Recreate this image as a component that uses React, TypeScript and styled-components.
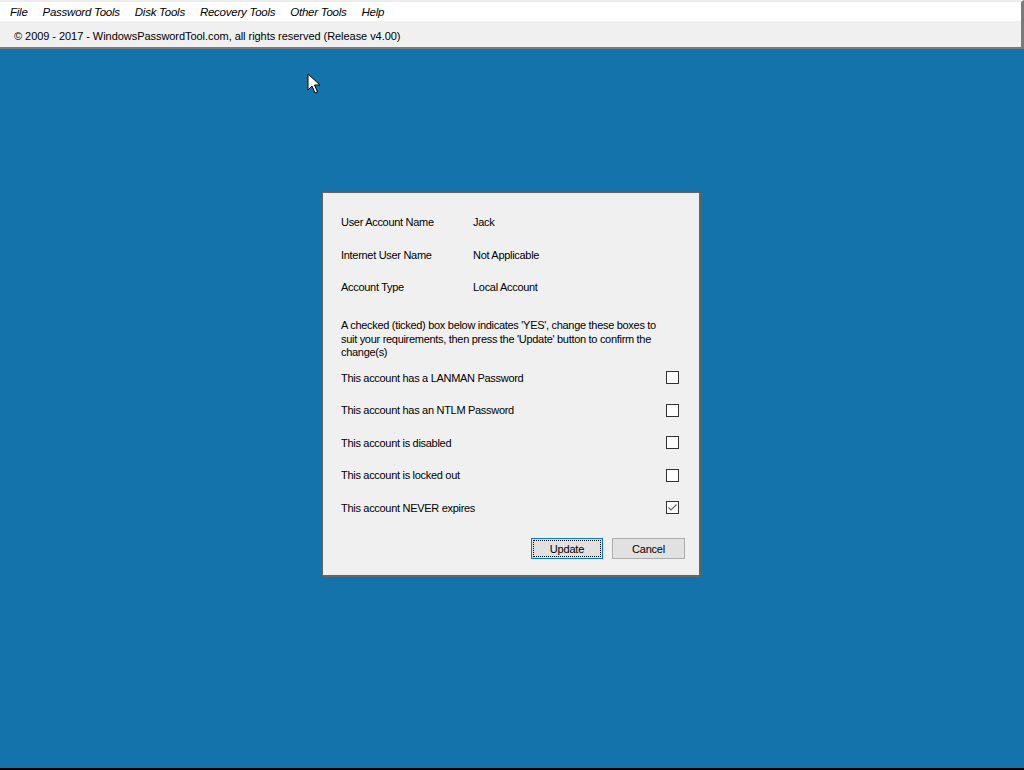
import styled, { createGlobalStyle } from "styled-components";

const GlobalStyle = createGlobalStyle`
  html, body {
    margin: 0;
    padding: 0;
    background: #000;
  }
  #root {
    height: 770px;
    width: 1024px;
    overflow: hidden;
  }
`;

const Screen = styled.div`
  position: relative;
  height: 768px;
  display: flex;
  flex-direction: column;
  background-color: #1373aa;
  font-family: "Liberation Sans", Arial, sans-serif;
  color: #000;
`;

const Header = styled.div`
  display: flex;
  flex-direction: column;
  border-top: 2px solid #ececec;
  border-right: 3px solid #7a7a7a;
  border-bottom: 2px solid #7a7a7a;
`;

const MenuBar = styled.div`
  height: 19px;
  display: flex;
  align-items: center;
  background: #fff;
  padding-left: 10px;
  padding-top: 1px;
  box-sizing: border-box;
  gap: 15px;
`;

const MenuItem = styled.span`
  font-style: italic;
  font-size: 11.5px;
  letter-spacing: -0.25px;
`;

const StatusBar = styled.div`
  height: 26px;
  box-sizing: border-box;
  padding-top: 3px;
  display: flex;
  align-items: center;
  background: #f0f0f0;
  padding-left: 14px;
  font-size: 11px;
  letter-spacing: -0.05px;
`;

const Desktop = styled.div`
  flex: 1;
  display: flex;
  justify-content: center;
  padding-top: 143px;
  padding-right: 1px;
`;

const Dialog = styled.div`
  width: 344px;
  height: 366px;
  box-sizing: content-box;
  background: #f0f0f0;
  border-top: 1px solid #646464;
  border-left: 1px solid #646464;
  border-right: 2px solid #646464;
  border-bottom: 2px solid #646464;
  padding: 0 14px 16px 18px;
  display: flex;
  flex-direction: column;
  font-size: 11px;
  letter-spacing: -0.3px;
`;

const InfoList = styled.div`
  display: flex;
  flex-direction: column;
  padding-top: 22px;
  gap: 18.5px;
`;

const InfoRow = styled.div`
  display: grid;
  grid-template-columns: 132px 1fr;
  height: 14px;
  line-height: 14px;
`;

const Notice = styled.p`
  margin: 25px 0 0;
  line-height: 13.5px;
  width: 322px;
`;

const OptionList = styled.div`
  display: flex;
  flex-direction: column;
  margin-top: 11px;
  gap: 18.5px;
`;

const OptionRow = styled.label`
  display: flex;
  align-items: center;
  justify-content: space-between;
  height: 14px;
  padding-right: 6px;
`;

const Box = styled.span`
  width: 11px;
  height: 11px;
  border: 1px solid #333;
  background: #fff;
  display: flex;
  align-items: center;
  justify-content: center;
`;

const Buttons = styled.div`
  margin-top: auto;
  display: flex;
  justify-content: flex-end;
  gap: 9px;
`;

const Button = styled.button<{ $default?: boolean }>`
  width: ${(p) => (p.$default ? "72px" : "73px")};
  height: 21px;
  padding: 0;
  background: #e1e1e1;
  border: 1px solid ${(p) => (p.$default ? "#0078d7" : "#adadad")};
  font-family: "Liberation Sans", Arial, sans-serif;
  font-size: 11px;
  letter-spacing: -0.2px;
  color: #000;
  position: relative;
  ${(p) =>
    p.$default &&
    `
    &::after {
      content: "";
      position: absolute;
      inset: 1px;
      border: 1px dotted #000;
    }
  `}
`;

const Cursor = styled.svg`
  position: absolute;
  left: 307px;
  top: 73px;
`;

const info = [
  ["User Account Name", "Jack"],
  ["Internet User Name", "Not Applicable"],
  ["Account Type", "Local Account"],
];

const options = [
  { label: "This account has a LANMAN Password", checked: false },
  { label: "This account has an NTLM Password", checked: false },
  { label: "This account is disabled", checked: false },
  { label: "This account is locked out", checked: false },
  { label: "This account NEVER expires", checked: true },
];

const menus = ["File", "Password Tools", "Disk Tools", "Recovery Tools", "Other Tools", "Help"];

export default function App() {
  return (
    <>
      <GlobalStyle />
      <Screen>
        <Header>
          <MenuBar>
            {menus.map((m) => (
              <MenuItem key={m}>{m}</MenuItem>
            ))}
          </MenuBar>
          <StatusBar>© 2009 - 2017 - WindowsPasswordTool.com, all rights reserved (Release v4.00)</StatusBar>
        </Header>
        <Desktop>
          <Dialog>
            <InfoList>
              {info.map(([k, v]) => (
                <InfoRow key={k}>
                  <span>{k}</span>
                  <span>{v}</span>
                </InfoRow>
              ))}
            </InfoList>
            <Notice>
              A checked (ticked) box below indicates 'YES', change these boxes to suit your
              requirements, then press the 'Update' button to confirm the change(s)
            </Notice>
            <OptionList>
              {options.map((o) => (
                <OptionRow key={o.label}>
                  <span>{o.label}</span>
                  <Box>
                    {o.checked && (
                      <svg width="11" height="11" viewBox="0 0 11 11">
                        <path d="M1.5 5.5 L4 8 L9.5 2.5" fill="none" stroke="#666" strokeWidth="1.2" />
                      </svg>
                    )}
                  </Box>
                </OptionRow>
              ))}
            </OptionList>
            <Buttons>
              <Button $default>Update</Button>
              <Button>Cancel</Button>
            </Buttons>
          </Dialog>
        </Desktop>
        <Cursor width="14" height="22" viewBox="0 0 14 22">
          <path d="M1 1 L1 17 L5 13 L8 20 L10.5 19 L7.5 12 L13 12 Z" fill="#fff" stroke="#000" strokeWidth="1" />
        </Cursor>
      </Screen>
    </>
  );
}
